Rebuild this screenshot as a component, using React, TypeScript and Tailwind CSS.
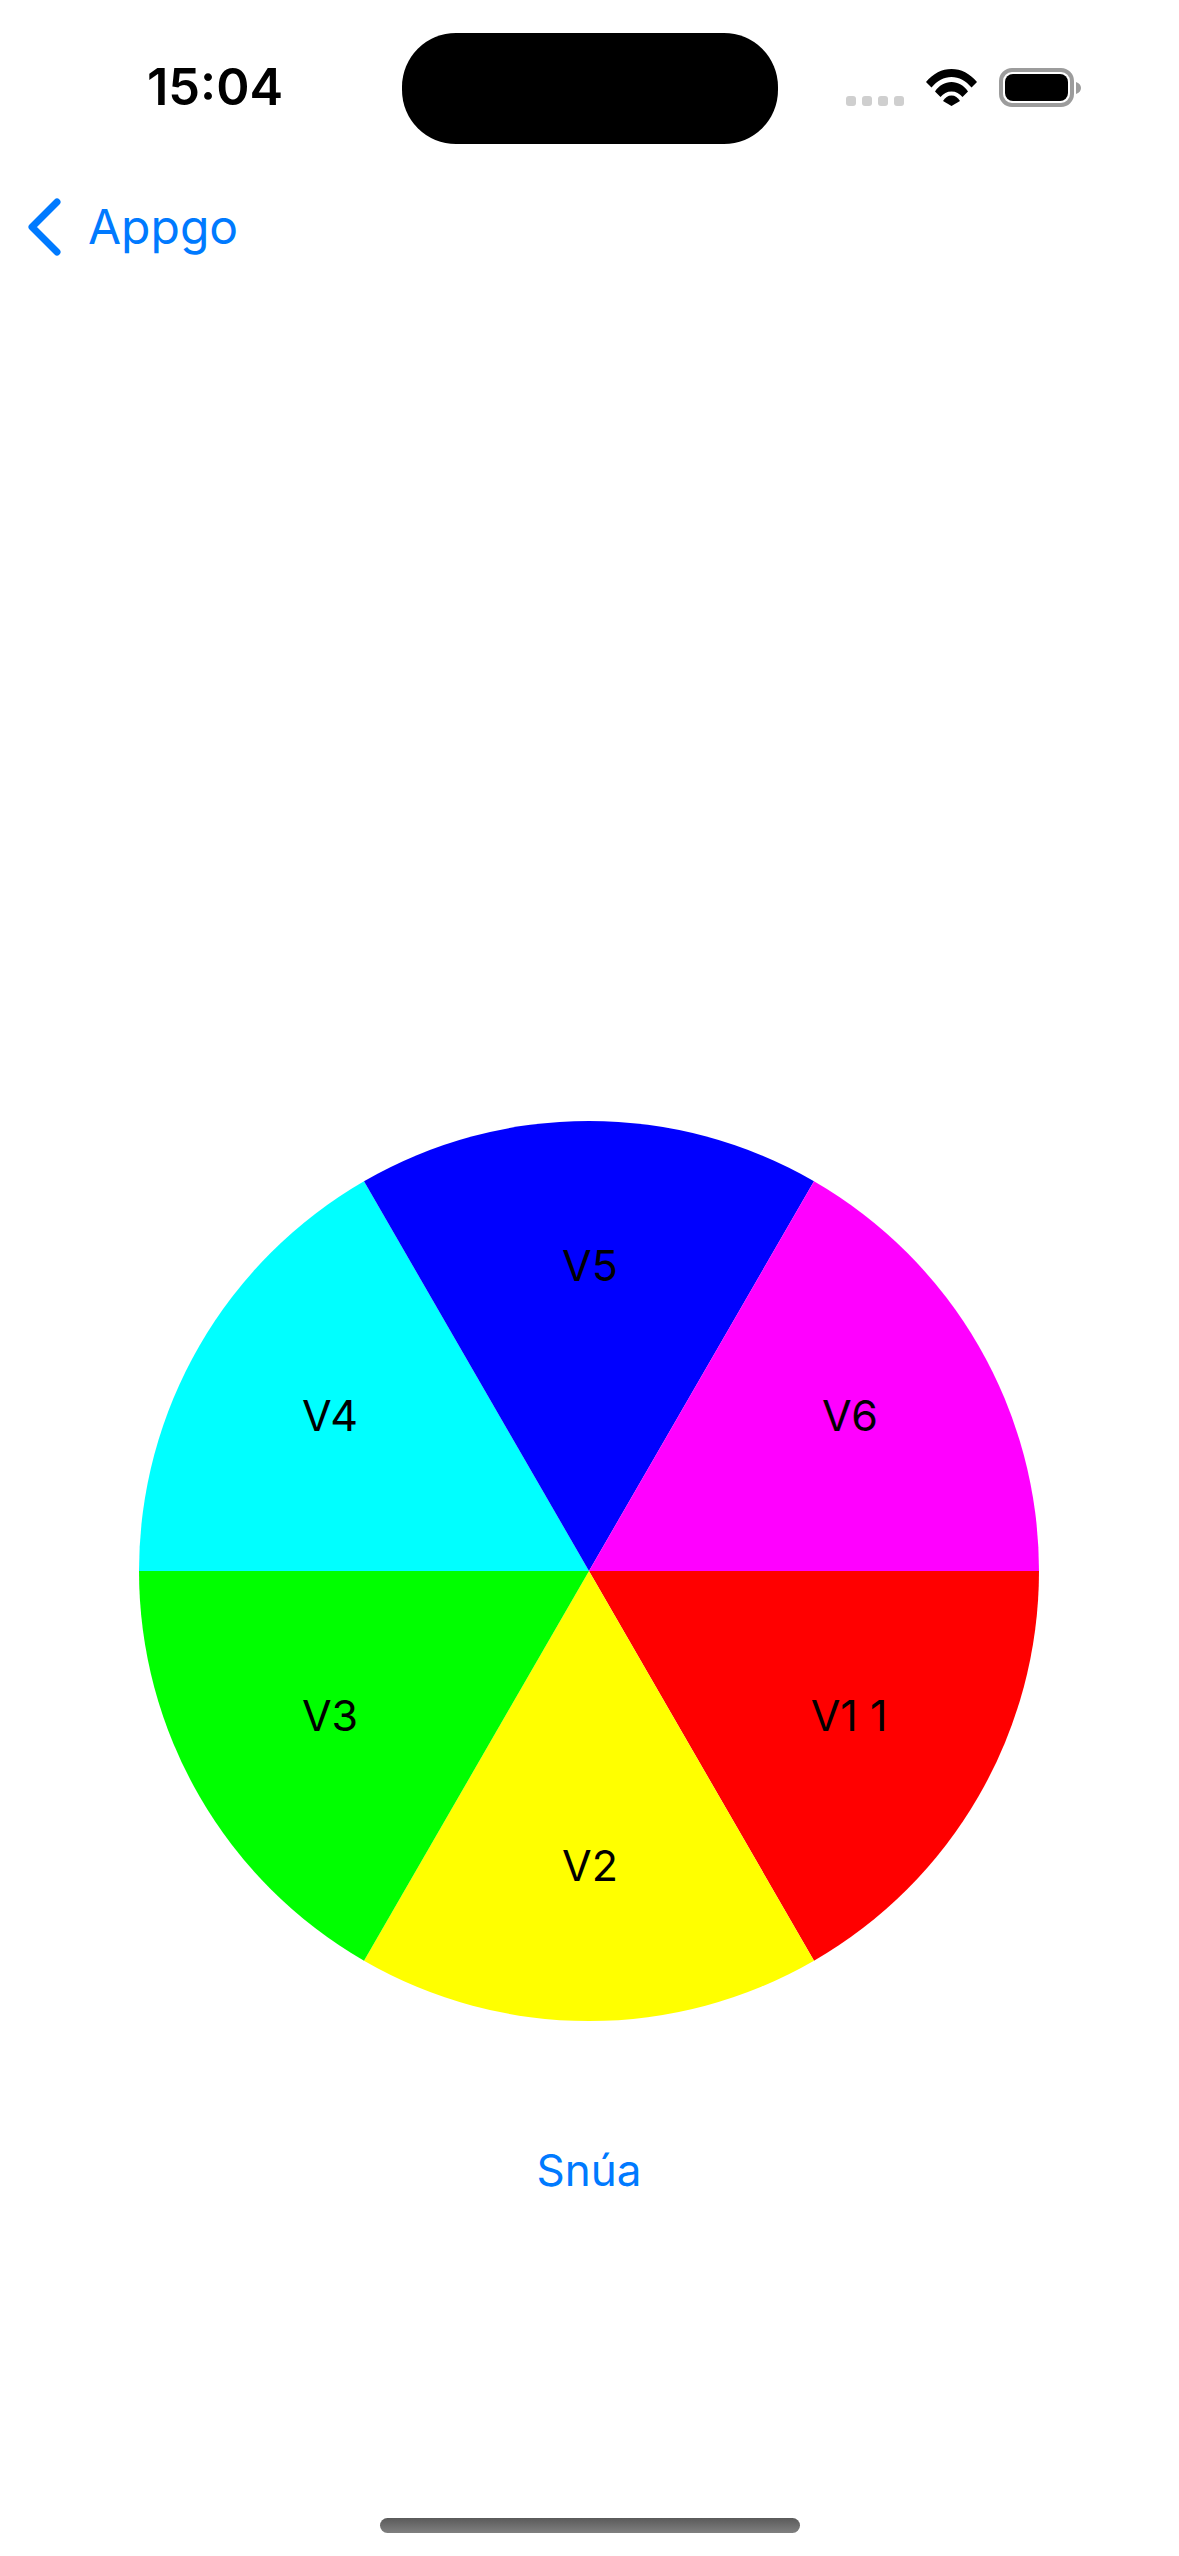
import React from "react";

const cx = 450;
const cy = 450;
const r = 450;
const dx = 225;
const dy = 389.7;

const slices = [
  { color: "#ff0000", d: `M${cx} ${cy} L${cx + r} ${cy} A${r} ${r} 0 0 1 ${cx + dx} ${cy + dy} Z` },
  { color: "#ffff00", d: `M${cx} ${cy} L${cx + dx} ${cy + dy} A${r} ${r} 0 0 1 ${cx - dx} ${cy + dy} Z` },
  { color: "#00ff00", d: `M${cx} ${cy} L${cx - dx} ${cy + dy} A${r} ${r} 0 0 1 ${cx - r} ${cy} Z` },
  { color: "#00ffff", d: `M${cx} ${cy} L${cx - r} ${cy} A${r} ${r} 0 0 1 ${cx - dx} ${cy - dy} Z` },
  { color: "#0000ff", d: `M${cx} ${cy} L${cx - dx} ${cy - dy} A${r} ${r} 0 0 1 ${cx + dx} ${cy - dy} Z` },
  { color: "#ff00ff", d: `M${cx} ${cy} L${cx + dx} ${cy - dy} A${r} ${r} 0 0 1 ${cx + r} ${cy} Z` },
];

const labels = [
  { text: "V1 1", x: 710, y: 596 },
  { text: "V2", x: 451, y: 746 },
  { text: "V3", x: 191, y: 596 },
  { text: "V4", x: 191, y: 296 },
  { text: "V5", x: 451, y: 146 },
  { text: "V6", x: 711, y: 296 },
];

function StatusBar() {
  return (
    <div className="flex items-center h-[111px] mt-[33px] pl-[147px]">
      <span className="w-[255px] text-[50.5px] leading-none font-semibold text-black -mt-[2px]">15:04</span>
      <div className="w-[376px] h-[111px] rounded-[54px] bg-black" />
      <div className="flex items-center ml-[68px] gap-[6px] mt-[25px]">
        <div className="w-[10px] h-[10px] rounded-[3px] bg-[#cfcfcf]" />
        <div className="w-[10px] h-[10px] rounded-[3px] bg-[#cfcfcf]" />
        <div className="w-[10px] h-[10px] rounded-[3px] bg-[#cfcfcf]" />
        <div className="w-[10px] h-[10px] rounded-[3px] bg-[#cfcfcf]" />
      </div>
      <svg className="ml-[22px] -mt-[2px]" width="51" height="37" viewBox="0 0 51 37">
        <path d="M0 13 C7 4.5 16 0 25.5 0 C35 0 44 4.5 51 13 L45.5 18.5 C40 12 33 8 25.5 8 C18 8 11 12 5.5 18.5 Z" fill="#000" />
        <path d="M9 22.5 C13 16.5 19 13 25.5 13 C32 13 38 16.5 42 22.5 L36.5 28 C33.5 24.5 30 22.5 25.5 22.5 C21 22.5 17.5 24.5 14.5 28 Z" fill="#000" />
        <path d="M17 32 C19 28.5 22 26.5 25.5 26.5 C29 26.5 32 28.5 34 32 L25.5 37 Z" fill="#000" />
      </svg>
      <div className="flex items-center ml-[22px] -mt-[2px]">
        <div className="flex items-center justify-center w-[75px] h-[39px] rounded-[13px] border-[4px] border-[#9c9c9c]">
          <div className="w-[63px] h-[27px] rounded-[8px] bg-black" />
        </div>
        <svg className="ml-[2px]" width="5" height="12" viewBox="0 0 5 12">
          <path d="M0 0 C3 1 5 3 5 6 C5 9 3 11 0 12 Z" fill="#9c9c9c" />
        </svg>
      </div>
    </div>
  );
}

function NavBar() {
  return (
    <div className="flex items-center h-[60px] mt-[53px] pl-[28px]">
      <svg width="34" height="58" viewBox="0 0 34 58">
        <path d="M29 4 L4 29 L29 54" fill="none" stroke="#007aff" strokeWidth="7" strokeLinecap="round" strokeLinejoin="round" />
      </svg>
      <span className="ml-[26px] text-[48px] leading-none text-[#007aff]">Appgo</span>
    </div>
  );
}

function Wheel() {
  return (
    <svg width="900" height="900" viewBox="0 0 900 900">
      {slices.map((s) => (
        <path key={s.color} d={s.d} fill={s.color} />
      ))}
      {labels.map((l) => (
        <text
          key={l.text}
          x={l.x}
          y={l.y + 14}
          textAnchor="middle"
          fontSize="43"
          fill="#000"
          fontFamily="Inter, sans-serif"
        >
          {l.text}
        </text>
      ))}
    </svg>
  );
}

export default function App() {
  return (
    <div className="w-[1179px] h-[2556px] bg-white flex flex-col font-['Inter',sans-serif] overflow-hidden">
      <StatusBar />
      <NavBar />
      <div className="flex flex-col items-center mt-[864px] pr-[1px]">
        <Wheel />
        <span className="mt-[127px] text-[44px] leading-none text-[#007aff]">Snúa</span>
        <div className="mt-[326px] ml-[2px] w-[420px] h-[15px] rounded-full bg-gradient-to-b from-[#5a5a5a] to-[#808080]" />
      </div>
    </div>
  );
}
